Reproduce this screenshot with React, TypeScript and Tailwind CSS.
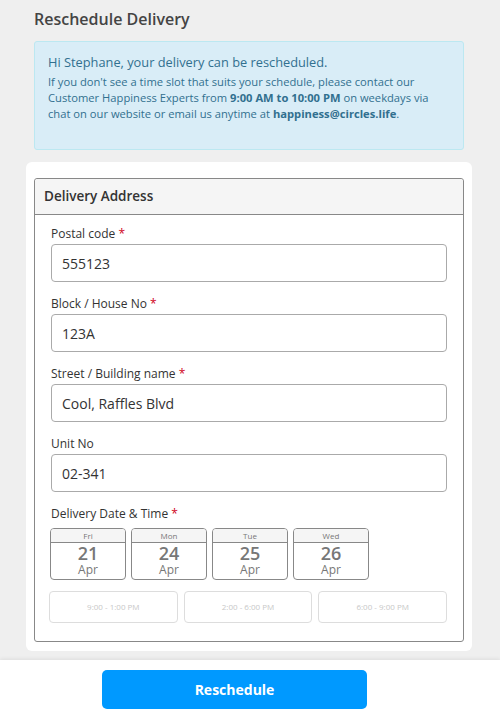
import React from 'react';

const font = { fontFamily: '"Open Sans", "Noto Sans", sans-serif' };

function Field({ label, value, required }: { label: string; value: string; required?: boolean }) {
  return (
    <div className="mb-[14px]">
      <div className="text-[12px] leading-[16px] h-[16px] text-[#333] mb-[2px]">
        {label} {required && <span className="text-[#d0021b]">*</span>}
      </div>
      <div className="h-[38px] border border-[#aaa] rounded-[4px] flex items-center px-[10px] text-[14px] text-[#333]">
        {value}
      </div>
    </div>
  );
}

const dates = [
  { day: 'Fri', num: '21' },
  { day: 'Mon', num: '24' },
  { day: 'Tue', num: '25' },
  { day: 'Wed', num: '26' },
];

const slots = ['9:00 - 1:00 PM', '2:00 - 6:00 PM', '6:00 - 9:00 PM'];

export default function App() {
  return (
    <div className="w-[500px] h-[716px] bg-[#efefef] flex flex-col overflow-hidden" style={font}>
      <div className="flex-1">
        <h1 className="text-[16px] font-semibold text-[#444] pl-[34px] pt-[8px] leading-[22px]">Reschedule Delivery</h1>
        <div className="mx-[34px] mt-[11px] w-[430px] h-[109px] bg-[#d9edf7] border border-[#bce8f1] rounded-[3px] px-[13px] pt-[10px] text-[#31708f]">
          <p className="text-[12.8px] leading-[20px]">Hi Stephane, your delivery can be rescheduled.</p>
          <p className="text-[11.2px] leading-[16px] mt-[2px]">
            If you don't see a time slot that suits your schedule, please contact our Customer Happiness Experts from{' '}
            <b>9:00 AM to 10:00 PM</b> on weekdays via chat on our website or email us anytime at{' '}
            <b>happiness@circles.life</b>.
          </p>
        </div>
        <div className="ml-[26px] mt-[12px] w-[446px] h-[489px] bg-white rounded-[6px] pt-[16px] px-[8px]">
          <div className="w-[430px] border border-[#888] rounded-[3px]">
            <div className="h-[36px] bg-[#f5f5f5] border-b border-[#888] rounded-t-[3px] flex items-center px-[9px] text-[13.5px] font-semibold text-[#333]">
              Delivery Address
            </div>
            <div className="px-[16px] pt-[11px] pb-[18px]">
              <Field label="Postal code" value="555123" required />
              <Field label="Block / House No" value="123A" required />
              <Field label="Street / Building name" value="Cool, Raffles Blvd" required />
              <Field label="Unit No" value="02-341" />
              <div className="text-[12px] leading-[16px] text-[#333] mt-[3px] mb-[6px]">
                Delivery Date &amp; Time <span className="text-[#d0021b]">*</span>
              </div>
              <div className="flex gap-[5px] -ml-[1px]">
                {dates.map((d) => (
                  <div key={d.num} className="w-[76px] h-[52px] border border-[#888] rounded-[4px] text-[#777] text-center overflow-hidden">
                    <div className="h-[14px] bg-[#f5f5f5] border-b border-[#888] text-[8px] leading-[13px]">{d.day}</div>
                    <div className="text-[18px] leading-[20px] font-semibold">{d.num}</div>
                    <div className="text-[12px] leading-[14px]">Apr</div>
                  </div>
                ))}
              </div>
              <div className="flex gap-[6px] mt-[11px] -ml-[2px]">
                {slots.map((s) => (
                  <div key={s} className="w-[129px] h-[32px] border border-[#ddd] rounded-[4px] flex items-center justify-center text-[8px] text-[#c8c8c8]">
                    {s}
                  </div>
                ))}
              </div>
            </div>
          </div>
        </div>
      </div>
      <div className="h-[56px] bg-white shadow-[0_-1px_4px_rgba(0,0,0,0.08)] flex justify-center pt-[10px] pr-[31px]">
        <button className="w-[265px] h-[39px] bg-[#0099ff] rounded-[5px] text-white font-bold text-[14px]">Reschedule</button>
      </div>
    </div>
  );
}
